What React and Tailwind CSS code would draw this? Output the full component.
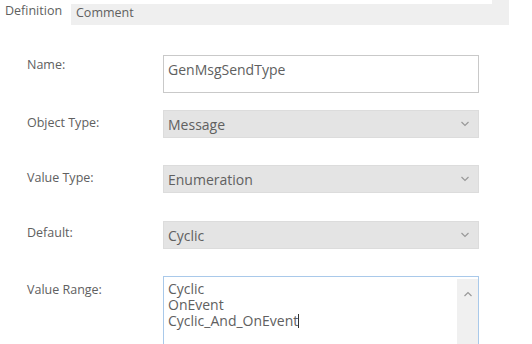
import React from "react";

const font = { fontFamily: '"Open Sans", "Noto Sans", sans-serif' };

const Chevron = ({ up = false }) => (
  <svg width="10" height="6" viewBox="0 0 10 6" className="text-[#999]">
    <path
      d={up ? "M1.5 5 L5 1.5 L8.5 5" : "M1.5 1 L5 4.5 L8.5 1"}
      fill="none"
      stroke="currentColor"
      strokeWidth="1.2"
    />
  </svg>
);

const Select = ({ value }) => (
  <div className="w-[316px] h-[28px] bg-[#e4e4e4] border border-[#dcdcdc] flex items-center justify-between pl-[4px] pr-[8px] text-[14px] text-[#606060]">
    <span>{value}</span>
    <Chevron />
  </div>
);

const Row = ({ label, labelPad, children, className = "" }) => (
  <div className={`flex items-start ${className}`}>
    <div
      className="w-[163px] pl-[27px] text-[12.5px] text-[#606060]"
      style={{ paddingTop: labelPad }}
    >
      {label}
    </div>
    {children}
  </div>
);

export default function App() {
  return (
    <div
      className="w-[532px] h-[344px] bg-white overflow-hidden text-[#606060]"
      style={font}
    >
      {/* TABS */}
      <div className="flex h-[25px]">
        <div className="w-[71px] pl-[5px] pt-[2px] text-[12.5px] text-[#606060]">
          Definition
        </div>
        <div className="w-[438px] flex flex-col">
          <div className="h-[4px] flex">
            <div className="flex-1 bg-white" />
            <div className="w-[17px] bg-[#efefef]" />
          </div>
          <div className="flex-1 bg-[#efefef] pl-[5px] text-[12.5px] leading-[18px] text-[#606060]">
            Comment
          </div>
        </div>
      </div>

      {/* FORM */}
      <div className="flex flex-col">
        <Row label="Name:" labelPad={31}>
          <div className="mt-[30px] w-[316px] h-[38px] border border-[#c9c9c9] bg-white pl-[4px] pt-[3px] text-[14px] text-[#606060]">
            GenMsgSendType
          </div>
        </Row>

        <Row label="Object Type:" labelPad={4} className="mt-[17px]">
          <Select value="Message" />
        </Row>

        <Row label="Value Type:" labelPad={4} className="mt-[27px]">
          <Select value="Enumeration" />
        </Row>

        <Row label="Default:" labelPad={3} className="mt-[28px]">
          <Select value="Cyclic" />
        </Row>

        <Row label="Value Range:" labelPad={5} className="mt-[27px]">
          <div className="w-[316px] h-[80px] border border-[#a9c9ea] bg-white flex">
            <div className="flex-1 pl-[4px] pt-[4px] text-[14px] leading-[16px] text-[#606060]">
              <div>Cyclic</div>
              <div>OnEvent</div>
              <div className="flex items-center">
                Cyclic_And_OnEvent
                <span className="inline-block w-px h-[14px] bg-[#333]" />
              </div>
            </div>
            <div className="w-[21px] mt-[2px] bg-[#f0f0f0] flex justify-center pt-[12px]">
              <Chevron up />
            </div>
          </div>
        </Row>
      </div>
    </div>
  );
}
